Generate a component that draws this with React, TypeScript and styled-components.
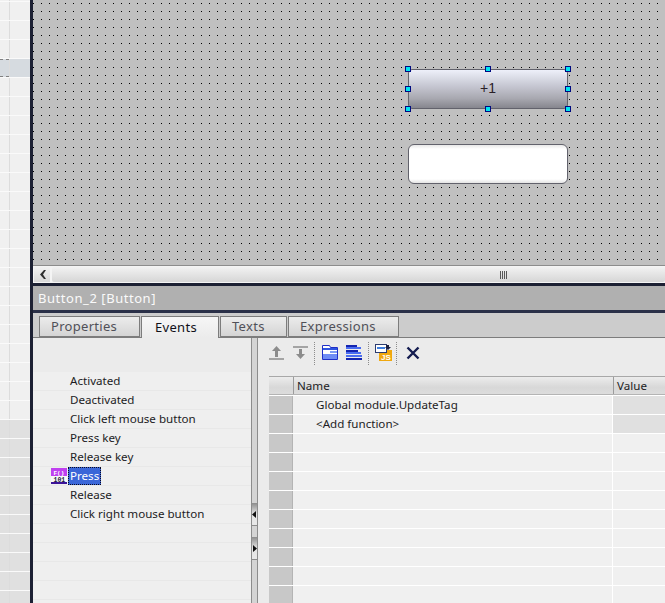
import React from "react";
import styled, { createGlobalStyle } from "styled-components";

const Global = createGlobalStyle`
  html, body { margin: 0; padding: 0; background: #efefef; }
  #root { width: 665px; height: 603px; overflow: hidden; }
  * { box-sizing: border-box; }
`;

const Shell = styled.div`
  display: flex;
  width: 665px;
  height: 603px;
  overflow: hidden;
  font-family: "Noto Sans", "Open Sans", sans-serif;
  font-size: 11.6px;
  color: #1c1c24;
`;

const Strip = styled.div`
  width: 30px;
  flex: none;
  overflow: hidden;
  background: #fff;
`;
const StripRows = styled.div`
  margin-top: -18px;
  display: flex;
  flex-direction: column;
`;
const StripRow = styled.div<{ $tone: string }>`
  height: 19px;
  flex: none;
  display: grid;
  grid-template-columns: 9px 20px;
  column-gap: 1px;
  border-top: 1px solid #fafafa;
  background: #dcdcdc;
  div { background: ${(p) => p.$tone}; }
`;
const StripFocus = styled.div<{ $tone: string }>`
  background: ${(p) => p.$tone};
  border-top: 1px dashed #808080;
  border-bottom: 1px dashed #808080;
`;

const Divider = styled.div`
  width: 3px;
  flex: none;
  background: #1c2033;
`;

const Main = styled.div`
  flex: 1;
  display: flex;
  flex-direction: column;
  min-width: 0;
`;

const Canvas = styled.div`
  position: relative;
  height: 265px;
  flex: none;
  background-color: #c0c0c0;
  background-image: conic-gradient(from 270deg at 1px 1px, #000 25%, transparent 0);
  background-size: 8px 8px;
  background-position: 0 3px;
`;

const HmiButton = styled.div`
  position: absolute;
  left: 375px;
  top: 69px;
  width: 160px;
  height: 40px;
  display: flex;
  align-items: center;
  justify-content: center;
  padding-bottom: 2px;
  border: 1px solid #62626c;
  border-radius: 4px;
  background: linear-gradient(#eef0fa 0%, #c8c9d4 40%, #a8a8b0 75%, #86868e 100%);
  font-family: "Liberation Sans", sans-serif;
  font-size: 14px;
  color: #2a2028;
`;
const Handle = styled.span<{ $x: number; $y: number }>`
  position: absolute;
  left: ${(p) => p.$x}px;
  top: ${(p) => p.$y}px;
  width: 6px;
  height: 6px;
  background: #00e6f0;
  border: 1px solid #000a80;
`;
const HmiField = styled.div`
  position: absolute;
  left: 375px;
  top: 144px;
  width: 160px;
  height: 40px;
  border: 1px solid #62626c;
  border-radius: 6px;
  background: linear-gradient(#e8e8e8 0, #fff 4px, #fff 34px, #e4e4e4 100%);
`;

const HScroll = styled.div`
  height: 18px;
  flex: none;
  display: flex;
  gap: 2px;
  padding: 1px 0 1px 1px;
  background: #f4f4f4;
  border-top: 1px solid #8c8c8c;
`;
const ScrollButton = styled.div`
  width: 16px;
  flex: none;
  display: flex;
  align-items: center;
  justify-content: center;
  background: linear-gradient(#f2f2f2, #d8d8d8);
`;
const ScrollTrack = styled.div`
  flex: 1;
  display: flex;
  align-items: center;
  justify-content: center;
  padding-left: 290px;
  border-radius: 2px;
  background: linear-gradient(#f2f2f2, #d6d6d6);
`;

const TitleBar = styled.div`
  height: 30px;
  flex: none;
  display: flex;
  align-items: center;
  padding-left: 5px;
  background: #b0b0b0;
  border-top: 3px solid #1c2033;
  border-bottom: 3px solid #2a3048;
  color: #fafafa;
  font-size: 13px;
  letter-spacing: 0.55px;
`;

const TabBar = styled.div`
  height: 25px;
  flex: none;
  display: flex;
  align-items: flex-end;
  gap: 1px;
  padding-left: 6px;
  background: #cccccc;
  border-bottom: 1px solid #7c7c7c;
`;
const Tab = styled.div<{ $w: number; $active?: boolean }>`
  width: ${(p) => p.$w}px;
  height: ${(p) => (p.$active ? 22 : 21)}px;
  margin-bottom: ${(p) => (p.$active ? -1 : 0)}px;
  display: flex;
  align-items: center;
  padding: 0 0 2px ${(p) => (p.$active ? 13 : 11)}px;
  font-size: 13px;
  letter-spacing: 0.3px;
  color: ${(p) => (p.$active ? "#101018" : "#505058")};
  background: ${(p) =>
    p.$active ? "linear-gradient(#f6f6f6, #ebebeb)" : "linear-gradient(#ececec, #d4d4d4)"};
  border: 1px solid #7c7c7c;
  border-bottom: ${(p) => (p.$active ? "none" : "1px solid #7c7c7c")};
`;

const Body = styled.div`
  flex: 1;
  display: flex;
  min-height: 0;
  background: #ebebeb;
`;

const EventList = styled.div`
  width: 218px;
  flex: none;
  padding-top: 34px;
  overflow: hidden;
`;
const EventRow = styled.div`
  position: relative;
  height: 19px;
  display: flex;
  align-items: center;
  padding: 0 0 1px 37px;
  background: #efefef;
  border-bottom: 1px solid #e8e8e8;
`;
const RowIcon = styled.svg`
  position: absolute;
  left: 18px;
  top: 1px;
`;
const Selected = styled.span`
  align-self: flex-start;
  margin-left: -2px;
  padding: 0 1px;
  height: 18px;
  line-height: 16px;
  background: #3a66d8;
  color: #fff;
  border: 1px dotted #0a0a20;
`;

const Splitter = styled.div`
  width: 7px;
  flex: none;
  display: flex;
  flex-direction: column;
  padding-top: 165px;
  gap: 11px;
  background: #d4d4d4;
  border-left: 1px solid #8c8c8c;
  border-right: 1px solid #8c8c8c;
`;
const SplitGrip = styled.div`
  height: 23px;
  display: flex;
  align-items: center;
  justify-content: center;
  background: linear-gradient(#8c8c8c, #e4e4e4 50%, #e8e8e8);
  border-bottom: 1px solid #8c8c8c;
`;

const Right = styled.div`
  flex: 1;
  min-width: 0;
  display: flex;
  flex-direction: column;
  padding-left: 11px;
`;
const Toolbar = styled.div`
  height: 38px;
  flex: none;
  display: flex;
  align-items: flex-start;
  padding-top: 4px;
`;
const ToolSlot = styled.div<{ $ml: number; $mt: number }>`
  margin-left: ${(p) => p.$ml}px;
  margin-top: ${(p) => p.$mt}px;
  display: flex;
`;
const ToolSep = styled.div<{ $ml: number }>`
  margin-left: ${(p) => p.$ml}px;
  width: 1px;
  height: 23px;
  border-left: 1px dotted #8c8c8c;
`;

const Table = styled.div`
  flex: 1;
  display: flex;
  flex-direction: column;
`;
const HeaderRow = styled.div`
  height: 19px;
  flex: none;
  display: grid;
  grid-template-columns: 24px 320px 1fr;
  background: linear-gradient(#ececec, #d8d8d8 60%, #dcdcdc);
  border-top: 1px solid #a8a8a8;
  border-bottom: 1px solid #b4b4b4;
`;
const HeaderCell = styled.div`
  display: flex;
  align-items: center;
  padding-left: 3px;
  border-left: 1px solid #9c9c9c;
  &:first-child { border-left: none; }
`;
const DataRow = styled.div`
  height: 19px;
  flex: none;
  display: grid;
  grid-template-columns: 23px 1px 319px 1fr;
  border-top: 1px solid #fff;
`;
const RowHead = styled.div`
  background: #c8c8c8;
`;
const RowHeadEdge = styled.div`
  background: #b4b4b4;
`;
const NameCell = styled.div`
  display: flex;
  align-items: center;
  padding: 0 0 2px 23px;
  background: #f0f0f0;
`;
const ValueCell = styled.div<{ $filled: boolean }>`
  background: ${(p) => (p.$filled ? "#e0e0e0" : "#f0f0f0")};
  border-left: 1px solid #fff;
`;

const ArrowUp = ({ down }: { down?: boolean }) => (
  <svg width="15" height="14" viewBox="0 0 15 14">
    <g fill="#a4a4a4">
      {down ? (
        <>
          <rect x="0" y="0" width="15" height="2" />
          <rect x="6" y="3" width="3" height="6" fill="#8c8c8c" />
          <path d="M3 8h9l-4.5 5z" fill="#8c8c8c" />
        </>
      ) : (
        <>
          <path d="M7.5 0L3 5h9z" fill="#8c8c8c" />
          <rect x="6" y="5" width="3" height="6" fill="#8c8c8c" />
          <rect x="0" y="12" width="15" height="2" />
        </>
      )}
    </g>
  </svg>
);

const FolderIcon = () => (
  <svg width="16" height="15" viewBox="0 0 16 15">
    <path d="M.5 .5h7l1 2h7v12H.5z" fill="#fff" stroke="#1f2fc8" />
    <rect x="1" y="3" width="14" height="2" fill="#2f55e0" />
    <rect x="8" y="6" width="7" height="2" fill="#7f9cf5" />
    <rect x="1" y="9" width="14" height="5" fill="#6f8cf5" />
  </svg>
);

const ListIcon = () => (
  <svg width="16" height="15" viewBox="0 0 16 15">
    <rect x="0" y="0" width="11" height="2" fill="#1424b0" />
    <rect x="0" y="2" width="15" height="2" fill="#4a6cf0" />
    <rect x="0" y="5" width="12" height="2" fill="#1424b0" />
    <rect x="0" y="7" width="15" height="2" fill="#4a6cf0" />
    <rect x="0" y="10" width="16" height="2" fill="#4a6cf0" />
    <rect x="0" y="13" width="16" height="2" fill="#1424b0" />
  </svg>
);

const JsIcon = () => (
  <svg width="17" height="17" viewBox="0 0 17 17">
    <rect x="4" y="6" width="13" height="11" fill="#f0a810" />
    <rect x=".5" y=".5" width="11" height="8" fill="#fff" stroke="#2c3c70" />
    <rect x="2" y="3" width="8" height="2" fill="#3f7fe0" />
    <path d="M11 1h3v2h2l-3 3-3-3h1z" fill="#1c2040" />
    <text x="6" y="15.5" fontFamily="Liberation Sans, sans-serif" fontSize="8" fontWeight="700" fill="#fff">JS</text>
  </svg>
);

const CloseIcon = () => (
  <svg width="14" height="14" viewBox="0 0 14 14">
    <path d="M1.5 1.5l11 11M12.5 1.5l-11 11" stroke="#141c50" strokeWidth="2.4" />
  </svg>
);

const FcIcon = () => (
  <RowIcon width="16" height="16" viewBox="0 0 16 16">
    <rect x="0" y="0" width="16" height="8" fill="#c040f0" />
    <rect x="0" y="8" width="16" height="6" fill="#f8f8f8" />
    <rect x="0" y="14" width="16" height="2" fill="#3c1498" />
    <text x="2.5" y="6.5" fontFamily="Liberation Mono, monospace" fontSize="6" fontWeight="700" fill="#fff">F()</text>
    <text x="2.5" y="13.5" fontFamily="Liberation Mono, monospace" fontSize="6.5" fontWeight="700" fill="#1c1c3c">101</text>
  </RowIcon>
);

const events = [
  "Activated",
  "Deactivated",
  "Click left mouse button",
  "Press key",
  "Release key",
  "Press",
  "Release",
  "Click right mouse button",
  "", "", "", "", "",
];

const handles: [number, number][] = [
  [-3, -3], [77, -3], [157, -3],
  [-3, 17], [157, 17],
  [-3, 37], [77, 37], [157, 37],
];

const tabs = [
  { label: "Properties", w: 101 },
  { label: "Events", w: 78, active: true },
  { label: "Texts", w: 67 },
  { label: "Expressions", w: 111 },
];

const stripRows = Array.from({ length: 33 }, (_, i) => i);
const tableRows = Array.from({ length: 11 }, (_, i) => i);
const names = ["Global module.UpdateTag", "<Add function>"];

export default function App() {
  return (
    <>
      <Global />
      <Shell>
        <Strip>
          <StripRows>
            {stripRows.map((i) => {
              const focus = i === 4;
              const tone = focus ? "#d6dbe0" : i >= 23 ? "#e0e0e0" : "#f0f0f0";
              return (
                <StripRow key={i} $tone={tone}>
                  {focus ? <StripFocus $tone={tone} /> : <div />}
                  <div />
                </StripRow>
              );
            })}
          </StripRows>
        </Strip>
        <Divider />
        <Main>
          <Canvas>
            <HmiButton>+1</HmiButton>
            <HmiField />
            {handles.map(([x, y]) => (
              <Handle key={`${x}-${y}`} $x={375 + x} $y={69 + y} />
            ))}
          </Canvas>
          <HScroll>
            <ScrollButton>
              <svg width="7" height="9" viewBox="0 0 7 9">
                <path d="M5 0L1 4.5 5 9h2L4 4.5 7 0z" fill="#303030" />
              </svg>
            </ScrollButton>
            <ScrollTrack>
              <svg width="8" height="8" viewBox="0 0 8 8">
                <path d="M.5 0v8M2.5 0v8M4.5 0v8M6.5 0v8" stroke="#585858" />
              </svg>
            </ScrollTrack>
          </HScroll>
          <TitleBar>Button_2 [Button]</TitleBar>
          <TabBar>
            {tabs.map((t) => (
              <Tab key={t.label} $w={t.w} $active={t.active}>{t.label}</Tab>
            ))}
          </TabBar>
          <Body>
            <EventList>
              {events.map((e, i) => (
                <EventRow key={i}>
                  {e === "Press" ? (
                    <>
                      <FcIcon />
                      <Selected>{e}</Selected>
                    </>
                  ) : (
                    e
                  )}
                </EventRow>
              ))}
            </EventList>
            <Splitter>
              <SplitGrip>
                <svg width="5" height="7" viewBox="0 0 5 7"><path d="M4 0v7L0 3.5z" fill="#101010" /></svg>
              </SplitGrip>
              <SplitGrip>
                <svg width="5" height="7" viewBox="0 0 5 7"><path d="M1 0v7l4-3.5z" fill="#101010" /></svg>
              </SplitGrip>
            </Splitter>
            <Right>
              <Toolbar>
                <ToolSlot $ml={0} $mt={4}><ArrowUp /></ToolSlot>
                <ToolSlot $ml={9} $mt={4}><ArrowUp down /></ToolSlot>
                <ToolSep $ml={6} />
                <ToolSlot $ml={7} $mt={3}><FolderIcon /></ToolSlot>
                <ToolSlot $ml={8} $mt={3}><ListIcon /></ToolSlot>
                <ToolSep $ml={6} />
                <ToolSlot $ml={6} $mt={2}><JsIcon /></ToolSlot>
                <ToolSep $ml={4} />
                <ToolSlot $ml={9} $mt={4}><CloseIcon /></ToolSlot>
              </Toolbar>
              <Table>
                <HeaderRow>
                  <HeaderCell />
                  <HeaderCell>Name</HeaderCell>
                  <HeaderCell>Value</HeaderCell>
                </HeaderRow>
                {tableRows.map((i) => (
                  <DataRow key={i}>
                    <RowHead />
                    <RowHeadEdge />
                    <NameCell>{names[i] ?? ""}</NameCell>
                    <ValueCell $filled={i < 2} />
                  </DataRow>
                ))}
              </Table>
            </Right>
          </Body>
        </Main>
      </Shell>
    </>
  );
}
